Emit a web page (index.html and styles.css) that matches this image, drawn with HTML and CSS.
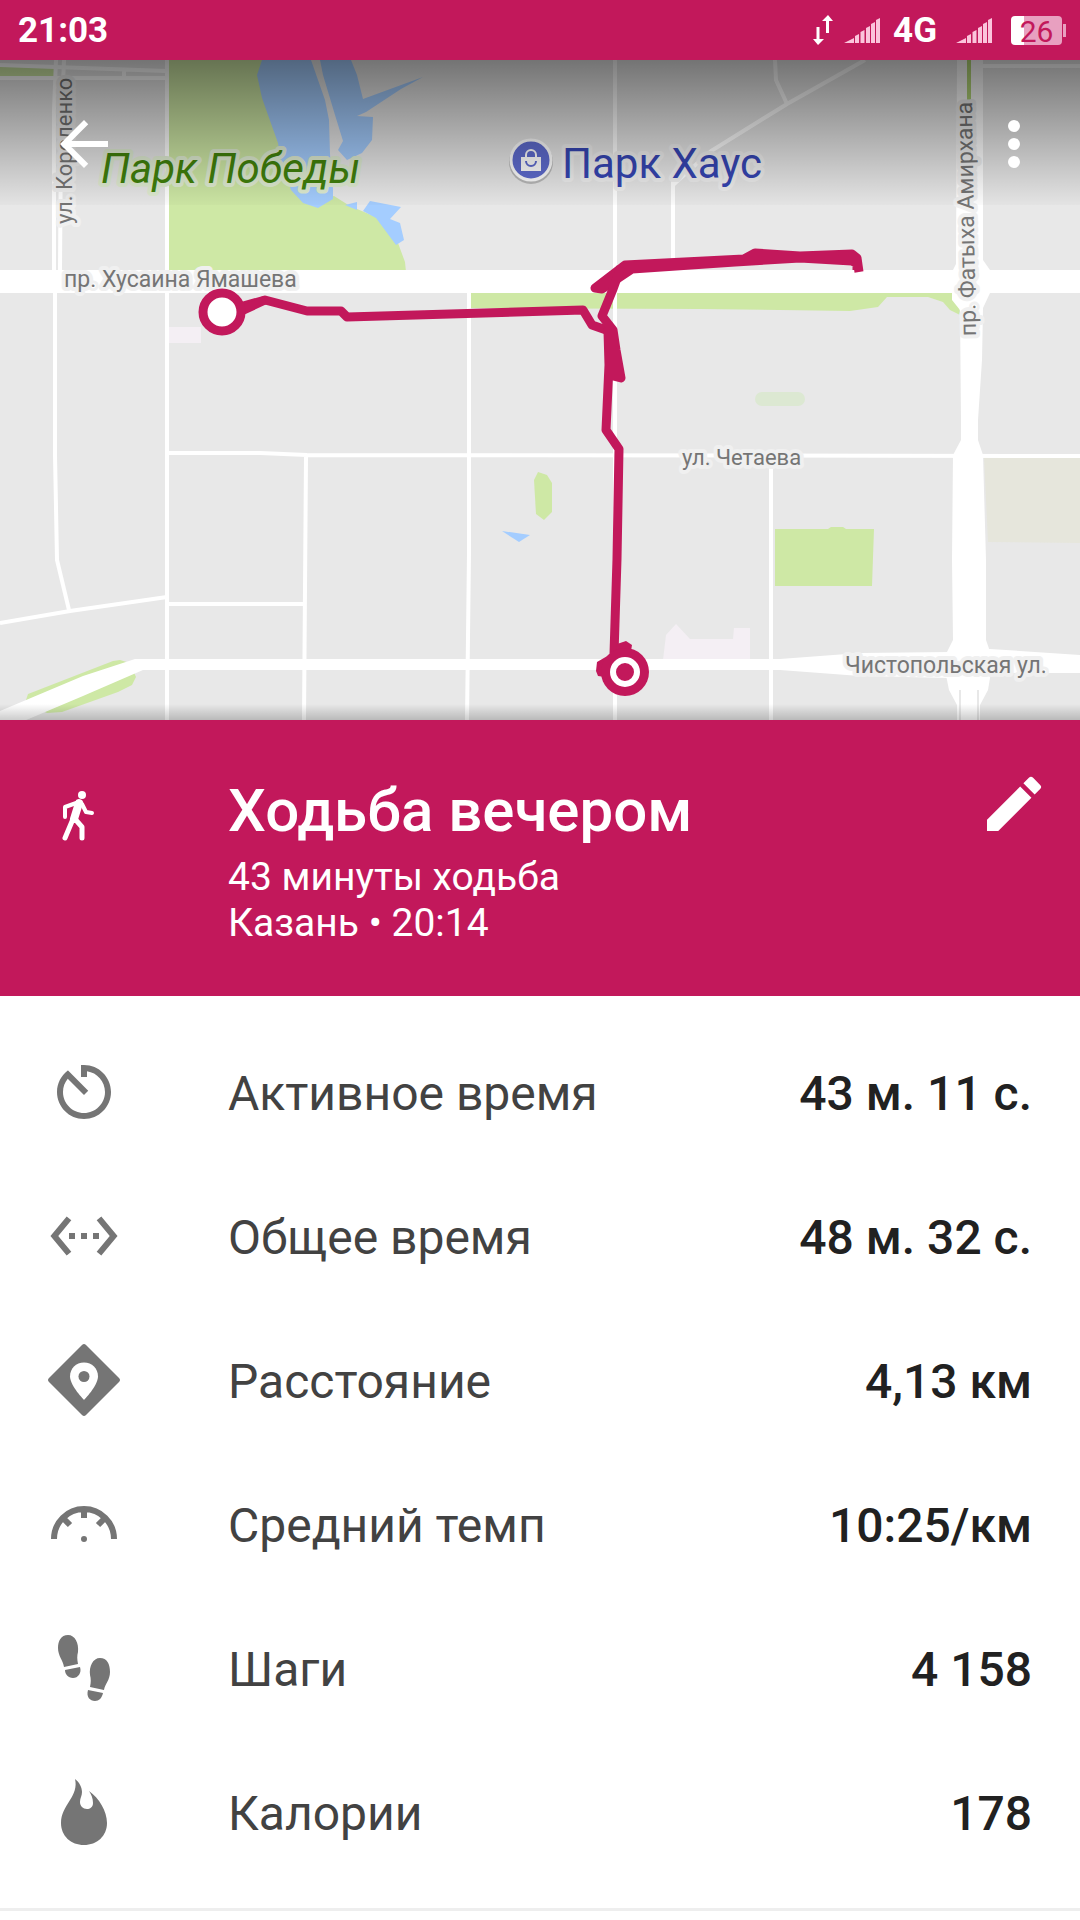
FILE: index.html
```html
<!DOCTYPE html>
<html lang="ru">
<head>
    <meta charset="UTF-8">
    <meta name="viewport" content="width=device-width, initial-scale=1.0">
    <title>Ходьба вечером</title>
    <link rel="stylesheet" href="styles.css">
</head>
<body>
    <div class="status-bar">
        <span class="status-text">21:03</span>
        <div class="status-icons">
            <svg class="net-arrows" width="20" height="30" viewBox="0 0 20 30">
                <path d="M3.500 12h3v12H11l-6 6-5-6h3.500zM13 18V6H9l6-6 5 6h-4v12z" fill="#fff"/>
            </svg>
            <svg class="signal" width="36" height="25" viewBox="0 0 36 25">
                <path d="M0 25l10-5v5zM11 18l4-2v9h-4zM16.500 14l4-2v13h-4zM22 10l4-2v17h-4zM27 6l4-2v21h-4zM32 2l4-2v25h-4z" fill="#fbc4dc"/>
            </svg>
            <span class="status-text network">4G</span>
            <svg class="signal" width="36" height="25" viewBox="0 0 36 25">
                <path d="M0 25l10-5v5zM11 18l4-2v9h-4zM16.500 14l4-2v13h-4zM22 10l4-2v17h-4zM27 6l4-2v21h-4zM32 2l4-2v25h-4z" fill="#fbc4dc"/>
            </svg>
            <div class="battery">
                <span class="battery-body">26</span>
                <span class="battery-tip"></span>
            </div>
        </div>
    </div>

    <div class="map">
        <svg class="map-canvas" viewBox="0 60 1080 660">
            <rect x="0" y="60" width="1080" height="660" fill="#e8e8e8"/>

            <!-- Парки и застройка -->
            <g fill="#cee8a5">
                <path d="M0 67h55v9H0z"/>
                <path d="M168 60h100l60 138 6-2 16 10 26 11 22 26 7 19 1 10H168z"/>
                <path d="M470 290h488l2 25-10-5-7-8-15-5h-41l-9 10-28 4-150-2-230-1z"/>
                <path d="M25 703l3-9 85-33 7-1 10 3 6 14-4 8-14 7-56 20-15 1z"/>
                <path d="M538 472l9 3 5 8v29l-8 8-8-6-2-34z"/>
                <path d="M775 529h53l3-2h12l3 2h28l-2 57h-97z"/>
            </g>
            <rect x="755" y="392" width="50" height="14" rx="7" fill="#dce8d2"/>
            <path d="M984 457h96v86l-92-1z" fill="#e6e6dc"/>
            <path d="M168 327h33v16h-33zM663 660l3-25 10-11 14 15h43l1-11h16v32z" fill="#f4eff4"/>

            <!-- Вода -->
            <g fill="#a4cdff">
                <path d="M262 60l-5 15 5 23 6 17 10 28 3 17 10 30 12 13 15 5 15-9v-10l-3-35-1-34-4-20-14-40z"/>
                <path d="M320 60h31l6 15 6 24 60-22-22 12-35 23-9 4 16 1-1 23-10 13-15 7-9-10 5-9-8-26-12-40z"/>
                <path d="M363 211l7-10 31 6-11 12 10 4 4 17-8 5-20-27z"/>
                <path d="M345 205l12-3v8z"/>
                <path d="M502 531l28 4-11 7z"/>
            </g>

            <!-- Улицы -->
            <g fill="none" stroke="#fff" stroke-width="4">
                <path d="M0 65l166 6M0 78h166M124 70v8"/>
                <path d="M56 60l-2 50v165M64 60l-3 70-1 140M55 290v165l2 105 12 50"/>
                <path d="M167 60v660M469 293v260l-2 167M615 60v660M673 180v90"/>
                <path d="M169 453h91l47 2 773 1M306 456l-2 264M169 604h135"/>
                <path d="M0 623l70-12 97-14"/>
                <path d="M865 60l-78 44-76 47-38 34M775 60l1 20 11 24"/>
                <path d="M771 456v264M980 66h100"/>
            </g>
            <g fill="#fff">
                <path d="M0 270h1080v23H0z"/>
                <path d="M0 711l83-35 52-17h645l80-6 90-1 40-3 90 6v18h-90l-40 5-90-2-80-6H143l-60 26-71 30H0z"/>
                <path d="M957 60h26v200l7 10v23l-7 15-1 52-4 60v20l5 15 3 105v80l7 20-5 30-8 15v20h-23v-20l-8-15-6-30 10-20-1-80 1-105 8-15v-20l-1-110-8-10v-28l4-8z"/>
            </g>
            <path d="M969 60v43" stroke="#b5d878" stroke-width="4"/>
            <path d="M960 690v30M978 690v30" stroke="#e8e8e8" stroke-width="2"/>

            <!-- Подписи -->
            <text class="street" x="64" y="287">пр. Хусаина Ямашева</text>
            <text class="street small" x="682" y="465">ул. Четаева</text>
            <text class="street" x="845" y="673">Чистопольская ул.</text>
            <text class="street small" transform="translate(72 224) rotate(-90)">ул. Короленко</text>
            <text class="street" transform="translate(976 336) rotate(-91)">пр. Фатыха Амирхана</text>
            <text class="park" x="101" y="183">Парк Победы</text>
            <text class="mall" x="562" y="178">Парк Хаус</text>
            <circle cx="531" cy="162" r="22" fill="#000" opacity=".2"/>
            <circle cx="531" cy="160" r="20" fill="#5f6cd0" stroke="#fff" stroke-width="3"/>
            <path d="M521 157h20v14h-20z" fill="#fff"/>
            <path d="M526 158v-3a5 5 0 0 1 10 0v3" fill="none" stroke="#fff" stroke-width="2"/>
            <path d="M526 161a5 5 0 0 0 10 0" fill="none" stroke="#5f6cd0" stroke-width="2"/>
        </svg>
        <div class="map-shade"></div>
        <svg class="map-route" viewBox="0 60 1080 660">
            <g fill="none" stroke="#c2185b" stroke-width="9" stroke-linejoin="round">
                <path d="M222 312l43-12 42 11h34l6 6 236-7 9 15 17 6"/>
                <path d="M222 320l43-20"/>
                <path d="M859 272l-2-14-5-4-52 2-45-3-11 6-119 6-30 23 7 1 30-20 103-7 65-4 52 3 5 3v6"/>
                <path d="M621 267l-8 22-11 27 11 14 3 20 5 28-8-2-2-17-3-28 1 34-3 65 13 19-2 110-3 95"/>
            </g>
            <path d="M597 662l19-11 1-7 9-3 6 4-2 12-25 20-7-1-2-5z" fill="#c2185b"/>
            <circle cx="222" cy="312" r="19" fill="#fff" stroke="#c2185b" stroke-width="9"/>
            <circle cx="625" cy="672" r="24" fill="#c2185b"/>
            <circle cx="625" cy="672" r="12" fill="none" stroke="#fff" stroke-width="6"/>
        </svg>
        <div class="app-bar">
            <button type="button" class="icon-btn" aria-label="Назад">
                <svg class="icon" viewBox="0 0 24 24"><path d="M20 11H7.830l5.590-5.590L12 4l-8 8 8 8 1.410-1.410L7.830 13H20v-2z"/></svg>
            </button>
            <button type="button" class="icon-btn" aria-label="Ещё">
                <svg class="icon" viewBox="0 0 24 24"><path d="M12 8a2 2 0 1 0 0-4 2 2 0 0 0 0 4zm0 2a2 2 0 1 0 0 4 2 2 0 0 0 0-4zm0 6a2 2 0 1 0 0 4 2 2 0 0 0 0-4z"/></svg>
            </button>
        </div>
    </div>

    <div class="activity">
        <svg class="icon walk" viewBox="0 0 72 72">
            <circle cx="34" cy="19" r="4"/>
            <g fill="none" stroke="#fff" stroke-linecap="round" stroke-linejoin="round">
                <path d="M31 26l-14 5v10" stroke-width="4"/>
                <path d="M34 28l4 8 6 1" stroke-width="4"/>
                <path d="M31 27l-5 16" stroke-width="8"/>
                <path d="M25 43l-8 19M27 43l7 8v11" stroke-width="5"/>
            </g>
        </svg>
        <div class="activity-info">
            <h1>Ходьба вечером</h1>
            <p>43 минуты ходьба</p>
            <p>Казань • 20:14</p>
        </div>
        <button type="button" class="icon-btn" aria-label="Изменить">
            <svg class="icon" viewBox="0 0 24 24"><path d="M3 17.250V21h3.750L17.810 9.940l-3.750-3.750L3 17.250zM20.710 7.040a1 1 0 0 0 0-1.410l-2.340-2.340a1 1 0 0 0-1.410 0l-1.830 1.830 3.750 3.750 1.830-1.830z"/></svg>
        </button>
    </div>

    <ul class="stats">
        <li class="stat">
            <svg class="icon" viewBox="0 0 24 24"><path d="M11 3v4h2V5.080c3.390.49 6 3.390 6 6.920 0 3.870-3.130 7-7 7s-7-3.130-7-7c0-1.680.59-3.220 1.580-4.420L12 13l1.410-1.410-6.800-6.800v.02C4.420 6.450 3 9.050 3 12c0 4.970 4.020 9 9 9 4.970 0 9-4.030 9-9s-4.030-9-9-9h-1z"/></svg>
            <span class="stat-name">Активное время</span>
            <span class="stat-value">43 м. 11 с.</span>
        </li>
        <li class="stat">
            <svg class="icon" viewBox="0 0 24 24"><path d="M7.770 6.760L6.230 5.480.82 12l5.410 6.520 1.540-1.280L3.420 12l4.350-5.240zM7 13h2v-2H7v2zm10-2h-2v2h2v-2zm-6 2h2v-2h-2v2zm6.770-7.520l-1.540 1.280L20.580 12l-4.350 5.240 1.540 1.280L23.180 12l-5.410-6.520z"/></svg>
            <span class="stat-name">Общее время</span>
            <span class="stat-value">48 м. 32 с.</span>
        </li>
        <li class="stat">
            <svg class="icon" viewBox="0 0 72 72">
                <path d="M34 1q2-2 4 0l33 33q2 2 0 4L38 71q-2 2-4 0L1 38q-2-2 0-4z"/>
                <path d="M36 18.500c-8 0-14 6-14 14 0 9 14 23.500 14 23.500s14-14.500 14-23.500c0-8-6-14-14-14z" fill="#fff"/>
                <circle cx="36" cy="32.500" r="5.500"/>
            </svg>
            <span class="stat-name">Расстояние</span>
            <span class="stat-value">4,13 км</span>
        </li>
        <li class="stat">
            <svg class="icon" viewBox="0 0 72 72">
                <path d="M6 51a30 30 0 0 1 60 0M36 20v10M15 30l7 7M57 30l-7 7" fill="none" stroke="#757575" stroke-width="6"/>
                <circle cx="36" cy="51" r="3"/>
            </svg>
            <span class="stat-name">Средний темп</span>
            <span class="stat-value">10:25/км</span>
        </li>
        <li class="stat">
            <svg class="icon" viewBox="0 0 72 72">
                <path d="M20 3c-7 0-10 6-10 13 0 8 5 12 6 19l14-3c-1-5-1-8 0-12 1-9-3-17-10-17zM17 38l15-3c2 6-2 11-7 11s-8-4-8-8z"/>
                <path d="M52 26c7 0 10 6 10 14 0 8-5 12-6 18l-14-3c1-5 1-8 0-12-1-9 3-17 10-17zM40 58l15 3c-1 5-4 8-8 8-5 0-9-4-7-11z"/>
            </svg>
            <span class="stat-name">Шаги</span>
            <span class="stat-value">4 158</span>
        </li>
        <li class="stat">
            <svg class="icon" viewBox="0 0 72 72">
                <path d="M27 3c4 3 7 8 7 13 0 4-2 6-2 10 0 4 3 7 7 7 3 0 6-2 6-6 0-5-2-9-4-12 10 7 18 20 18 32 0 13-10 22-23 22S13 60 13 47c0-9 4-15 9-23 4-6 7-13 5-21z"/>
            </svg>
            <span class="stat-name">Калории</span>
            <span class="stat-value">178</span>
        </li>
    </ul>
</body>
</html>
```

FILE: styles.css
```css
* {
    box-sizing: border-box;
}
body {
    margin: 0;
    font-family: Roboto, "Noto Sans", sans-serif;
    background: #fff;
    color: #212121;
}
.status-bar {
    display: flex;
    align-items: center;
    justify-content: space-between;
    height: 60px;
    padding: 0 14px 0 18px;
    background: #c2185b;
    color: #fff;
}
.status-text {
    padding-top: 2px;
    font-size: 35px;
    font-weight: 700;
    line-height: 60px;
}
.status-icons {
    display: flex;
    align-items: center;
}
.signal {
    margin-left: 11px;
}
.network {
    margin: 0 8px 0 13px;
}
.battery {
    display: flex;
    align-items: center;
    gap: 1px;
    margin-left: 19px;
}
.battery-body {
    width: 51px;
    height: 29px;
    border-radius: 4px;
    background: linear-gradient(to right, #fff 13px, #e8a0c0 13px);
    color: #c2185b;
    font-size: 30px;
    line-height: 31px;
    text-align: center;
}
.battery-tip {
    width: 3px;
    height: 13px;
    background: #e8a0c0;
}
.map {
    position: relative;
}
.map-canvas {
    display: block;
    width: 100%;
}
.map-route {
    position: absolute;
    top: 0;
    left: 0;
    width: 100%;
}
/* затемнение под панелью и тень снизу */
.map-shade {
    position: absolute;
    inset: 0;
    background:
        linear-gradient(to bottom, rgba(0,0,0,0.5), rgba(0,0,0,0.02) 145px, transparent 145px),
        linear-gradient(to top, rgba(0,0,0,0.2), transparent 16px);
}
.map text {
    paint-order: stroke;
    stroke: #f0f0f0;
    stroke-width: 8px;
    stroke-linejoin: round;
}
.map .street {
    font-size: 23px;
    fill: #757575;
}
.map .street.small {
    font-size: 22px;
}
.map .park {
    font-size: 42px;
    font-style: italic;
    fill: #41820b;
    stroke: #e0edd2;
}
.map .mall {
    font-size: 42px;
    fill: #3646b4;
}
.app-bar {
    position: absolute;
    top: 48px;
    left: 0;
    right: 0;
    display: flex;
    justify-content: space-between;
    padding: 0 30px 0 48px;
}
.icon {
    display: block;
    flex: none;
    width: 72px;
    height: 72px;
    fill: #757575;
}
.icon-btn {
    padding: 0;
    border: none;
    background: none;
    cursor: pointer;
}
.icon-btn .icon,
.icon.walk {
    fill: #fff;
}
.activity {
    display: flex;
    align-items: flex-start;
    padding: 48px 30px 50px 48px;
    background: #c2185b;
    color: #fff;
}
.icon.walk {
    margin-top: 8px;
}
.activity-info {
    flex: 1;
    margin-left: 108px;
}
.activity h1 {
    margin: 0;
    font-size: 60px;
    font-weight: 500;
    line-height: 86px;
}
.activity p {
    margin: 0;
    font-size: 39px;
    line-height: 46px;
}
.stats {
    margin: 0;
    padding: 24px 0;
    list-style: none;
    border-bottom: 3px solid #eee;
}
.stat {
    display: flex;
    align-items: center;
    height: 144px;
    padding: 0 48px;
    font-size: 48px;
    line-height: 60px;
}
.stat-name,
.stat-value {
    padding-top: 4px;
}
.stat-name {
    flex: 1;
    margin-left: 108px;
    color: #424242;
}
.stat-value {
    font-weight: 500;
}
```
